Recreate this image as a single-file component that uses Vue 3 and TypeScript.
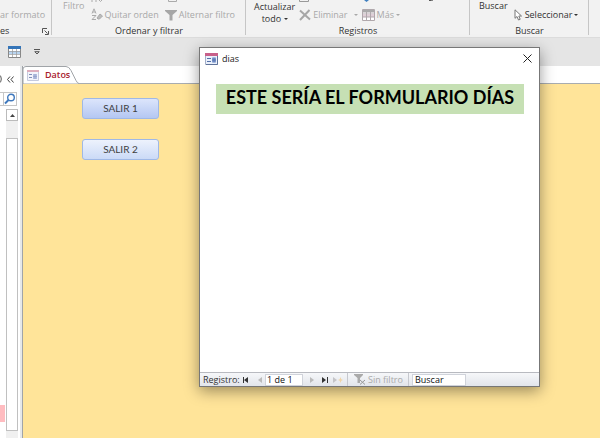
<script setup lang="ts">
import { ref } from 'vue'

const record = ref('1 de 1')
const search = ref('Buscar')
const actions: string[] = ['SALIR 1', 'SALIR 2']
</script>

<template>
  <div class="app">
    <header class="ribbon">
      <section class="group clipboard">
        <div class="tools"><button class="tool off">ar formato</button></div>
        <div class="caption">
          <span>es</span>
          <svg class="launcher" width="7" height="7" viewBox="0 0 7 7" fill="none" stroke="#555"><path d="M.5 5V.5H5M2.5 2.5l3 3M6.500 3v3.500H3" /></svg>
        </div>
      </section>

      <section class="group sorting">
        <div class="tools">
          <button class="tool big off">Filtro</button>
          <div class="stack">
            <svg class="cut" width="12" height="2" viewBox="0 0 12 2" stroke="#aaa" fill="none"><path d="M1 0v2M5 0v2M8 0l1.500 1.500L11 0" /></svg>
            <button class="tool off">
              <svg width="12" height="13" viewBox="0 0 12 13" fill="none" stroke="#aaa"><path d="M1 5.500L3 .8l2 4.700M1.700 4h2.600M1 7.500h4l-4 4h4" /><path d="M6 10l3-4L11.500 8l-3 3H7z" fill="#bbb" /></svg>
              Quitar orden
            </button>
          </div>
          <div class="stack">
            <svg class="cut" width="12" height="2" viewBox="0 0 12 2" stroke="#aaa" fill="none"><path d="M3.500 0v1.500h8V0" /></svg>
            <button class="tool off">
              <svg width="12" height="12" viewBox="0 0 12 12"><path d="M0 1h12v1L7.500 6v5.500h-3V6L0 2z" fill="#a6a6a6" /></svg>
              Alternar filtro
            </button>
          </div>
        </div>
        <div class="caption">Ordenar y filtrar</div>
      </section>

      <section class="group records">
        <div class="tools">
          <button class="tool big">Actualizar<br />todo <i class="arrow"></i></button>
          <div class="stack">
            <svg class="cut" width="12" height="2" viewBox="0 0 12 2" stroke="#999" fill="none"><path d="M.5 0v1.500h9V0" /></svg>
            <button class="tool off">
              <svg width="12" height="12" viewBox="0 0 12 12" fill="none" stroke="#a6a6a6" stroke-width="2"><path d="M1 1.500l10 9M10.500 1L1 11" /></svg>
              Eliminar <i class="arrow far"></i>
            </button>
          </div>
          <div class="stack">
            <svg class="cut" width="12" height="2" viewBox="0 0 12 2"><path d="M2 0h5L4.500 2z" fill="#3f7fc0" /></svg>
            <button class="tool off">
              <svg width="13" height="12" viewBox="0 0 13 12" fill="#fff" stroke="#b0a8ac"><path d="M.5.5h12v11H.5z" /><path d="M1 1h11v2H1z" fill="#aaa" stroke="none" /><path d="M1 5h11v3H1z" fill="#dfcfd7" stroke="none" /><path d="M.5 4h12M.5 8h12M4.500 3v9M8.500 3v9" /></svg>
              Más <i class="arrow"></i>
            </button>
          </div>
          <svg class="cut tail" width="8" height="2" viewBox="0 0 8 2" stroke="#555" fill="none"><path d="M1 .5h2.500L5 0" /></svg>
        </div>
        <div class="caption">Registros</div>
      </section>

      <section class="group find">
        <div class="tools">
          <button class="tool big">Buscar</button>
          <div class="stack">
            <button class="tool">
              <svg width="9" height="12" viewBox="0 0 9 12" fill="#fff" stroke="#777"><path d="M1 .8v8.500l2-1.800 1.500 3.500 1.700-.7L4.800 7H7.500z" /></svg>
              Seleccionar <i class="arrow"></i>
            </button>
          </div>
        </div>
        <div class="caption">Buscar</div>
      </section>
    </header>

    <div class="quick">
      <button class="plain" aria-label="Hoja de datos">
        <svg width="13" height="12" viewBox="0 0 13 12"><path d="M.5.500h12v11H.5z" fill="#fff" stroke="#888" /><path d="M0 0h13v3H0z" fill="#3474b8" /><path d="M1 5h11v3H1z" fill="#b9d5f0" /><path d="M1 5.500h11M1 8.500h11M4.500 3v8M8.500 3v8" stroke="#999" stroke-width=".7" /></svg>
      </button>
      <button class="plain" aria-label="Personalizar">
        <svg width="6" height="6" viewBox="0 0 6 6" fill="none" stroke="#444"><path d="M0 .500h6M.8 2.700L3 5 5.200 2.700z" stroke-width=".9" /></svg>
      </button>
    </div>

    <main class="work">
      <aside class="nav">
        <div class="nav-head">
          <svg width="2" height="10" viewBox="0 0 2 10" fill="none" stroke="#555"><path d="M-1 .8Q1.300 1.500 1.300 5T-1 9.200" /></svg>
          <button class="plain" aria-label="Contraer">
            <svg width="7" height="7" viewBox="0 0 7 7" fill="none" stroke="#444"><path d="M3 .500l-2.500 3 2.500 3M6.500.500L4 3.500l2.500 3" /></svg>
          </button>
        </div>
        <div class="nav-search">
          <button class="plain" aria-label="Buscar objetos">
            <svg width="12" height="12" viewBox="0 0 12 12" fill="none" stroke="#3f78bd"><circle cx="7" cy="4.500" r="3.300" stroke-width="1.400" /><path d="M4.500 7L1 10.500" stroke-width="2" /></svg>
          </button>
        </div>
        <div class="nav-list">
          <div class="items"><div class="selected"></div></div>
          <div class="scroll">
            <button class="up" aria-label="Subir"><svg width="5" height="3" viewBox="0 0 5 3"><path d="M0 3L2.500 0 5 3z" fill="#444" /></svg></button>
            <div class="thumb"></div>
          </div>
        </div>
      </aside>

      <section class="doc">
        <div class="tabs">
          <div class="tab">
            <svg class="tab-edge" width="56" height="18" viewBox="0 0 56 18" fill="none"><path d="M0 18V3Q0 .5 3 .5H43Q46 .5 48 4.500L53 14.500Q54.500 17.500 56 17.500V18z" fill="#fff" stroke="#a0a4a8" /></svg>
            <svg width="12" height="11" viewBox="0 0 12 11"><path d="M.5.500h11v10H.5z" fill="#f2f4fb" stroke="#c5cade" /><path d="M0 0h12v2H0z" fill="#dcaebd" /><path d="M2 4.500h3M2 7.500h3" stroke="#8290b8" /><path d="M6 4h4v5H6z" fill="#b3bfe0" /><path d="M6 6.500h4M8 4v5" stroke="#8d9bc8" stroke-width=".6" /></svg>
            <span>Datos</span>
          </div>
        </div>
        <div class="form">
          <button v-for="(a, i) in actions" :key="a" class="exit" :class="{ active: i === 0 }">{{ a }}</button>
        </div>
      </section>
    </main>

    <div class="dialog" role="dialog" aria-labelledby="dialog-title">
      <div class="titlebar">
        <svg width="13" height="12" viewBox="0 0 13 12"><path d="M.5.500h12v11H.5z" fill="#eaf0fb" stroke="#a3aec8" /><path d="M12.500 3v8.500H1" stroke="#5f7299" fill="none" /><path d="M0 0h13v3H0z" fill="#c8608a" /><path d="M2 5.500h4M2 8.500h4" stroke="#5470a8" /><path d="M7 4.500h4v5H7z" fill="#7f9bd0" /><path d="M7 7h4M9 4.500v5" stroke="#47629f" stroke-width=".6" /></svg>
        <span id="dialog-title">dias</span>
        <button class="plain close" aria-label="Cerrar">
          <svg width="9" height="9" viewBox="0 0 9 9" stroke="#222"><path d="M.5.500l8 8M8.500.500l-8 8" /></svg>
        </button>
      </div>
      <div class="content"><h1>ESTE SERÍA EL FORMULARIO DÍAS</h1></div>
      <footer class="recordbar">
        <label for="record">Registro:</label>
        <button class="plain first" aria-label="Primero"><svg width="6" height="6" viewBox="0 0 6 6" fill="#333"><path d="M0 0h1v6H0zM5 0v6L1 3z" /></svg></button>
        <button class="plain prev" aria-label="Anterior"><svg width="4" height="6" viewBox="0 0 4 6"><path d="M4 0v6L0 3z" fill="#bbb" /></svg></button>
        <input id="record" v-model="record" class="record" />
        <button class="plain next" aria-label="Siguiente"><svg width="4" height="6" viewBox="0 0 4 6"><path d="M0 0v6l4-3z" fill="#bbb" /></svg></button>
        <button class="plain last" aria-label="Último"><svg width="6" height="6" viewBox="0 0 6 6" fill="#333"><path d="M0 0v6l4-3-4-3zM5 0h1v6H5z" /></svg></button>
        <button class="plain new" aria-label="Nuevo"><svg width="10" height="6" viewBox="0 0 10 6"><path d="M0 0v6l4-3z" fill="#c4c4c8" /><path d="M7.500 0L8.300 2.200 10 3 8.300 3.800 7.500 6 6.700 3.800 5 3l1.700-.8z" fill="#f0d5a8" /></svg></button>
        <button class="plain nofilter">
          <svg width="12" height="11" viewBox="0 0 12 11"><path d="M0 0h9v1L6 4v5H3.500V4L0 1z" fill="#aaa" /><path d="M6 6l5 4.500M11 6l-5 4.500" stroke="#999" /></svg>
          Sin filtro
        </button>
        <input v-model="search" class="search" aria-label="Buscar" />
      </footer>
    </div>
  </div>
</template>

<style>
body {
  overflow: hidden;
}
</style>

<style scoped>
.app {
  position: relative;
  display: flex;
  flex-direction: column;
  height: 100vh;
  overflow: hidden;
  background: #e5e5e5;
  color: #333;
  font: 9px/12px "Open Sans", "Noto Sans", sans-serif;
}
* {
  box-sizing: border-box;
}
svg {
  display: block;
  flex: none;
}
button,
input {
  margin: 0;
  padding: 0;
  border: 0;
  border-radius: 0;
  background: none;
  color: inherit;
  font: inherit;
}
.plain {
  display: flex;
  align-items: center;
}

/* Ribbon */
.ribbon {
  display: flex;
  height: 38px;
  flex: none;
  background: #f2f2f2;
  border-bottom: 1px solid #dcdcdc;
}
.group {
  position: relative;
  display: flex;
  flex: none;
  flex-direction: column;
  justify-content: space-between;
  white-space: nowrap;
}
.group::after {
  content: "";
  position: absolute;
  right: 0;
  top: 0;
  width: 1px;
  height: 35px;
  background: #c6c6c6;
}
.clipboard {
  width: 52px;
}
.clipboard .tools {
  padding-top: 8px;
}
.clipboard .caption {
  display: flex;
  align-items: center;
  justify-content: space-between;
  padding-right: 3px;
}
.sorting {
  width: 194px;
}
.records {
  width: 224px;
}
.find {
  width: 119px;
}
.tools {
  display: flex;
  height: 25px;
}
.sorting .tools {
  gap: 6px;
  padding-left: 11px;
}
.records .tools {
  gap: 4px;
  padding-left: 8px;
}
.find .tools {
  gap: 6px;
  padding-left: 9px;
}
.tool {
  display: flex;
  align-items: center;
  gap: 2px;
  height: 13px;
  white-space: nowrap;
}
.tool.big {
  display: block;
  height: 25px;
  line-height: 12px;
  align-self: flex-start;
  text-align: center;
}
.tool.big:not(:has(br)) {
  height: 12px;
}
.tool.off {
  color: #a8a8a8;
}
.stack {
  display: flex;
  flex-direction: column;
  gap: 6px;
}
.find .stack {
  padding-top: 8px;
}
.tail {
  margin-left: 24px;
}
.arrow {
  display: inline-block;
  border: 2px solid transparent;
  border-top-color: currentColor;
  border-bottom: 0;
  vertical-align: middle;
}
.far {
  margin-left: 4px;
}
.caption {
  text-align: center;
  height: 12px;
}

/* Quick access bar */
.quick {
  display: flex;
  flex: none;
  align-items: center;
  gap: 13px;
  height: 28px;
  padding-left: 8px;
}

/* Navigation pane */
.work {
  display: flex;
  flex: 1;
  min-height: 0;
}
.nav {
  display: flex;
  flex-direction: column;
  width: 22px;
  flex: none;
  background: #fff;
  border-right: 2px solid #e6e8ea;
}
.nav-head {
  display: flex;
  align-items: center;
  justify-content: space-between;
  height: 26px;
  padding-right: 6px;
}
.nav-search {
  display: flex;
  justify-content: flex-end;
  height: 14px;
  margin-right: 3px;
  border: 1px solid #c6c6c6;
  border-left: 0;
}
.nav-search .plain {
  border-left: 1px solid #c6c6c6;
}
.nav-list {
  display: flex;
  flex: 1;
  padding-top: 3px;
}
.items {
  display: flex;
  flex: 1;
  flex-direction: column;
  justify-content: flex-end;
  padding-bottom: 16px;
}
.selected {
  width: 5px;
  height: 17px;
  background: #ffbcc0;
}
.scroll {
  display: flex;
  flex-direction: column;
  width: 12px;
  margin-right: 2px;
  padding-bottom: 7px;
  background: #f0f0f0;
}
.up {
  display: flex;
  align-items: center;
  justify-content: center;
  height: 12px;
  border: 1px solid #bbb;
  background: #fff;
}
.thumb {
  flex: 1;
  margin-top: 17px;
  border: 1px solid #c0c0c0;
  background: #fff;
}

/* Document */
.doc {
  display: flex;
  flex: 1;
  flex-direction: column;
  border-left: 1px solid #a0a4a8;
}
.tabs {
  height: 18px;
  flex: none;
  background: #fff;
  border-bottom: 1px solid #a8acb0;
}
.tab {
  position: relative;
  display: flex;
  align-items: center;
  gap: 6px;
  width: 56px;
  height: 18px;
  padding-left: 4px;
  color: #a8202c;
  font-weight: 600;
}
.tab > * {
  position: relative;
}
.tab .tab-edge {
  position: absolute;
  left: 0;
  top: 0;
}
.form {
  display: flex;
  flex: 1;
  flex-direction: column;
  gap: 20px;
  padding: 14px 0 0 59px;
  background: #ffe499;
}
.exit {
  width: 77px;
  height: 21px;
  border: 1px solid #9fb8e6;
  border-radius: 3px;
  background: linear-gradient(#edf2fc, #cbdaf7);
  color: #404040;
  font: 10px/19px Lato, sans-serif;
}
.exit.active {
  background: linear-gradient(#dce5fb, #b4c7f2);
}

/* Dialog window */
.dialog {
  position: absolute;
  left: 199px;
  top: 47px;
  display: flex;
  flex-direction: column;
  width: 341px;
  height: 340px;
  border: 1px solid #777;
  background: #fff;
  box-shadow: 0 4px 14px rgba(0, 0, 0, 0.4);
}
.titlebar {
  display: flex;
  align-items: center;
  gap: 4px;
  height: 21px;
  padding: 0 7px 0 5px;
  color: #222;
}
.close {
  margin-left: auto;
}
.content {
  flex: 1;
  padding: 15px 15px 0 16px;
}
h1 {
  height: 30px;
  margin: 0;
  background: #c6e0b4;
  color: #000;
  font: bold 18px/27px Lato, sans-serif;
  text-align: center;
  white-space: nowrap;
}
.recordbar {
  display: flex;
  align-items: center;
  height: 14px;
  padding-left: 3px;
  border-top: 1px solid #b8bac0;
  background: linear-gradient(#f6f7f9, #e2e5eb);
  white-space: nowrap;
}
.recordbar label {
  width: 40px;
}
.first {
  width: 15px;
}
.prev {
  width: 7px;
}
.recordbar input {
  height: 12px;
  padding-left: 2px;
  border: 1px solid #d0d3da;
  background: #fff;
  color: #111;
}
.recordbar .record {
  width: 38px;
  padding-left: 1px;
}
.next {
  margin-left: 7px;
  width: 12px;
}
.last {
  width: 11px;
}
.new {
  width: 14px;
}
.nofilter {
  gap: 2px;
  height: 13px;
  width: 62px;
  padding-left: 6px;
  border: 1px solid #c6c8ce;
  border-width: 0 1px;
  color: #aaa;
}
.search {
  width: 54px;
  margin-left: 3px;
}
</style>
